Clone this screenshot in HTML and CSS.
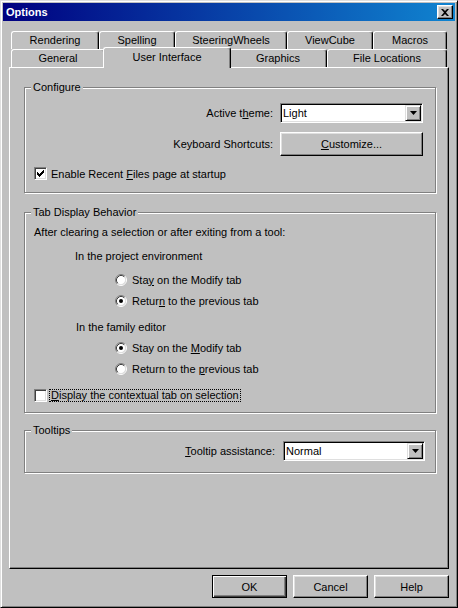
FILE: index.html
```html
<!DOCTYPE html>
<html>
<head>
<meta charset="utf-8">
<title>Options</title>
<link rel="stylesheet" href="styles.css">
</head>
<body>
<div class="window">
  <div class="titlebar">
    <span class="title">Options</span>
    <span class="close"><svg width="8" height="7" viewBox="0 0 8 7"><path d="M0 0 L2 0 L4 2 L6 0 L8 0 L5 3.5 L8 7 L6 7 L4 5 L2 7 L0 7 L3 3.5 Z" fill="#000"/></svg></span>
  </div>
  <div class="body">
    <div class="tabs">
      <div class="tabrow back">
        <div class="tab t-rend">Rendering</div>
        <div class="tab t-spell">Spelling</div>
        <div class="tab t-steer">SteeringWheels</div>
        <div class="tab t-view">ViewCube</div>
        <div class="tab t-mac">Macros</div>
      </div>
      <div class="tabrow front">
        <div class="tab t-gen">General</div>
        <div class="tab sel t-ui">User Interface</div>
        <div class="tab t-gfx">Graphics</div>
        <div class="tab t-fl">File Locations</div>
      </div>
    </div>
    <div class="panel">
      <div class="group g-config">
        <span class="legend">Configure</span>
        <div class="row">
          <span class="lbl">Active t<u>h</u>eme:</span>
          <div class="combo c-theme">
            <span class="value">Light</span>
            <span class="drop"><svg width="7" height="4" viewBox="0 0 7 4"><polygon points="0,0 7,0 3.5,4" fill="#000"/></svg></span>
          </div>
        </div>
        <div class="row r-btn">
          <span class="lbl">Keyboard Shortcuts:</span>
          <div class="btn b-custom"><span><u>C</u>ustomize...</span></div>
        </div>
        <div class="check r-check">
          <span class="cbox"><svg width="7" height="7" viewBox="0 0 7 7" shape-rendering="crispEdges"><path d="M0.5 2v3M1.5 3v3M2.5 4v3M3.5 3v3M4.5 2v3M5.5 1v3M6.5 0v3" stroke="#000" stroke-width="1"/></svg></span>
          <span>Enable Recent <u>F</u>iles page at startup</span>
        </div>
      </div>

      <div class="group g-tab">
        <span class="legend">Tab Display Behavior</span>
        <div class="line">After clearing a selection or after exiting from a tool:</div>
        <div class="line sub s-proj">In the project environment</div>
        <div class="radio r1">
          <svg class="rb" width="12" height="12" viewBox="0 0 12 12"><circle cx="6" cy="6" r="4.5" fill="#fff"/><path d="M2.11 9.89 A5.5 5.5 0 0 1 9.89 2.11" stroke="#808080" fill="none"/><path d="M9.89 2.11 A5.5 5.5 0 0 1 2.11 9.89" stroke="#fff" fill="none"/><path d="M2.82 9.18 A4.5 4.5 0 0 1 9.18 2.82" stroke="#404040" fill="none"/><path d="M9.18 2.82 A4.5 4.5 0 0 1 2.82 9.18" stroke="#dfdfdf" fill="none"/></svg>
          <span>Sta<u>y</u> on the Modify tab</span>
        </div>
        <div class="radio r2">
          <svg class="rb" width="12" height="12" viewBox="0 0 12 12"><circle cx="6" cy="6" r="4.5" fill="#fff"/><path d="M2.11 9.89 A5.5 5.5 0 0 1 9.89 2.11" stroke="#808080" fill="none"/><path d="M9.89 2.11 A5.5 5.5 0 0 1 2.11 9.89" stroke="#fff" fill="none"/><path d="M2.82 9.18 A4.5 4.5 0 0 1 9.18 2.82" stroke="#404040" fill="none"/><path d="M9.18 2.82 A4.5 4.5 0 0 1 2.82 9.18" stroke="#dfdfdf" fill="none"/><circle cx="6" cy="6" r="2" fill="#000"/></svg>
          <span>Retur<u>n</u> to the previous tab</span>
        </div>
        <div class="line sub s-fam">In the family editor</div>
        <div class="radio r3">
          <svg class="rb" width="12" height="12" viewBox="0 0 12 12"><circle cx="6" cy="6" r="4.5" fill="#fff"/><path d="M2.11 9.89 A5.5 5.5 0 0 1 9.89 2.11" stroke="#808080" fill="none"/><path d="M9.89 2.11 A5.5 5.5 0 0 1 2.11 9.89" stroke="#fff" fill="none"/><path d="M2.82 9.18 A4.5 4.5 0 0 1 9.18 2.82" stroke="#404040" fill="none"/><path d="M9.18 2.82 A4.5 4.5 0 0 1 2.82 9.18" stroke="#dfdfdf" fill="none"/><circle cx="6" cy="6" r="2" fill="#000"/></svg>
          <span>Stay on the <u>M</u>odify tab</span>
        </div>
        <div class="radio r4">
          <svg class="rb" width="12" height="12" viewBox="0 0 12 12"><circle cx="6" cy="6" r="4.5" fill="#fff"/><path d="M2.11 9.89 A5.5 5.5 0 0 1 9.89 2.11" stroke="#808080" fill="none"/><path d="M9.89 2.11 A5.5 5.5 0 0 1 2.11 9.89" stroke="#fff" fill="none"/><path d="M2.82 9.18 A4.5 4.5 0 0 1 9.18 2.82" stroke="#404040" fill="none"/><path d="M9.18 2.82 A4.5 4.5 0 0 1 2.82 9.18" stroke="#dfdfdf" fill="none"/></svg>
          <span>Return to the <u>p</u>revious tab</span>
        </div>
        <div class="check r-ctx">
          <span class="cbox"></span>
          <span class="focus"><u>D</u>isplay the contextual tab on selection</span>
        </div>
      </div>

      <div class="group g-tips">
        <span class="legend">Tooltips</span>
        <div class="row r-tips">
          <span class="lbl"><u>T</u>ooltip assistance:</span>
          <div class="combo c-tips">
            <span class="value">Normal</span>
            <span class="drop"><svg width="7" height="4" viewBox="0 0 7 4"><polygon points="0,0 7,0 3.5,4" fill="#000"/></svg></span>
          </div>
        </div>
      </div>
    </div>
    <div class="actions">
      <div class="btn dlg default">OK</div>
      <div class="btn dlg">Cancel</div>
      <div class="btn dlg">Help</div>
    </div>
  </div>
</div>
</body>
</html>
```
FILE: styles.css
```css
* { box-sizing: border-box; }
html, body { margin: 0; padding: 0; }
body {
  width: 458px;
  height: 608px;
  overflow: hidden;
  background: #c0c0c0;
  font: 11px "Liberation Sans", Arial, sans-serif;
  color: #000;
}
u { text-decoration: underline; text-underline-offset: 1px; }

.window {
  width: 458px;
  height: 608px;
  border: 1px solid;
  border-color: #dfdfdf #000 #000 #dfdfdf;
  box-shadow: inset 1px 1px #fff, inset -1px -1px #808080;
  padding: 2px;
  display: flex;
  flex-direction: column;
  background: #c0c0c0;
}

.titlebar {
  height: 18px;
  background: linear-gradient(to right, #000080, #1084d0);
  display: flex;
  align-items: center;
  justify-content: space-between;
  padding: 0 2px 0 3px;
  color: #fff;
  font-weight: bold;
  font-size: 11px;
}
.close {
  width: 16px;
  height: 14px;
  background: #c0c0c0;
  border: 1px solid;
  border-color: #fff #000 #000 #fff;
  box-shadow: inset -1px -1px #808080, inset 1px 1px #dfdfdf;
  display: flex;
  align-items: center;
  justify-content: center;
}
.close svg { display: block; }

.body {
  flex: 1;
  padding: 10px 6px 0;
  display: flex;
  flex-direction: column;
}

.tabs { padding-left: 2px; }
.tabrow { display: flex; height: 18px; }
.tabrow.front { align-items: flex-end; }
.tab {
  height: 18px;
  border-top: 1px solid #fff;
  border-left: 1px solid #fff;
  border-right: 1px solid #000;
  box-shadow: inset -1px 0 #808080;
  border-radius: 3px 3px 0 0;
  text-align: center;
  line-height: 17px;
  background: #c0c0c0;
  white-space: nowrap;
}
.tab.sel {
  height: 21px;
  margin: 0 -2px -1px;
  position: relative;
  z-index: 2;
  line-height: 18px;
}
.t-rend { width: 88px; }
.t-spell { width: 76px; }
.t-steer { width: 112px; }
.t-view { width: 86px; }
.t-mac { width: 74px; }
.t-gen { width: 94px; }
.t-ui { width: 128px; }
.t-gfx { width: 98px; }
.t-fl { width: 120px; }

.panel {
  height: 502px;
  border: 1px solid;
  border-color: #fff #000 #000 #fff;
  box-shadow: inset -1px -1px #808080;
  padding: 19px 12px 0 14px;
  display: flex;
  flex-direction: column;
  position: relative;
  z-index: 1;
}

.group {
  position: relative;
  border: 1px solid #808080;
  box-shadow: inset 1px 1px #fff, 1px 1px #fff;
}
.legend {
  position: absolute;
  top: -7px;
  left: 6px;
  padding: 0 2px;
  line-height: 13px;
  background: #c0c0c0;
}

.g-config { padding: 15px 12px 12px 9px; }
.g-tab { margin-top: 19px; padding: 13px 12px 10px 9px; }
.g-tips { margin-top: 17px; padding: 10px 10px 11px 9px; }

.row {
  display: flex;
  justify-content: flex-end;
  align-items: center;
  gap: 7px;
}
.r-btn { margin-top: 9px; }
.r-tips { gap: 8px; }

.combo {
  height: 20px;
  border: 1px solid;
  border-color: #808080 #fff #fff #808080;
  box-shadow: inset 1px 1px #000, inset -1px -1px #dfdfdf;
  background: #fff;
  display: flex;
  align-items: center;
  padding: 1px;
}
.c-theme { width: 143px; }
.c-tips { width: 142px; }
.combo .value { flex: 1; padding-left: 1px; line-height: 16px; }
.drop {
  width: 16px;
  height: 16px;
  background: #c0c0c0;
  border: 1px solid;
  border-color: #dfdfdf #000 #000 #dfdfdf;
  box-shadow: inset 1px 1px #fff, inset -1px -1px #808080;
  display: flex;
  align-items: center;
  justify-content: center;
}
.drop svg { display: block; }

.btn {
  background: #c0c0c0;
  border: 1px solid;
  border-color: #fff #000 #000 #fff;
  box-shadow: inset -1px -1px #808080, inset 1px 1px #dfdfdf;
  display: flex;
  align-items: center;
  justify-content: center;
}
.b-custom { width: 143px; height: 24px; }

.check {
  display: flex;
  align-items: center;
  gap: 4px;
  height: 13px;
}
.r-check { margin-top: 11px; }
.cbox {
  width: 13px;
  height: 13px;
  flex: none;
  background: #fff;
  border: 1px solid;
  border-color: #808080 #fff #fff #808080;
  box-shadow: inset 1px 1px #404040, inset -1px -1px #dfdfdf;
  display: flex;
  align-items: center;
  justify-content: center;
}
.cbox svg { display: block; }
.focus { outline: 1px dotted #000; padding: 0 1px; margin-left: -1px; line-height: 11px; }

.line { height: 13px; line-height: 13px; white-space: nowrap; }
.s-proj { margin-top: 11px; padding-left: 41px; }
.s-fam { margin-top: 14px; padding-left: 42px; }

.radio {
  display: flex;
  align-items: center;
  gap: 5px;
  height: 13px;
  padding-left: 81px;
}
.radio .rb { display: block; flex: none; }
.r1 { margin-top: 10px; }
.r2 { margin-top: 8px; }
.r3 { margin-top: 7px; }
.r4 { margin-top: 8px; }
.r-ctx { margin-top: 14px; }

.actions {
  display: flex;
  justify-content: flex-end;
  gap: 6px;
  margin-top: 6px;
}
.btn.dlg { width: 75px; height: 23px; }
.btn.default {
  border: 1px solid #000;
  box-shadow: inset 1px 1px #fff, inset -1px -1px #404040, inset -2px -2px #808080;
}
```
